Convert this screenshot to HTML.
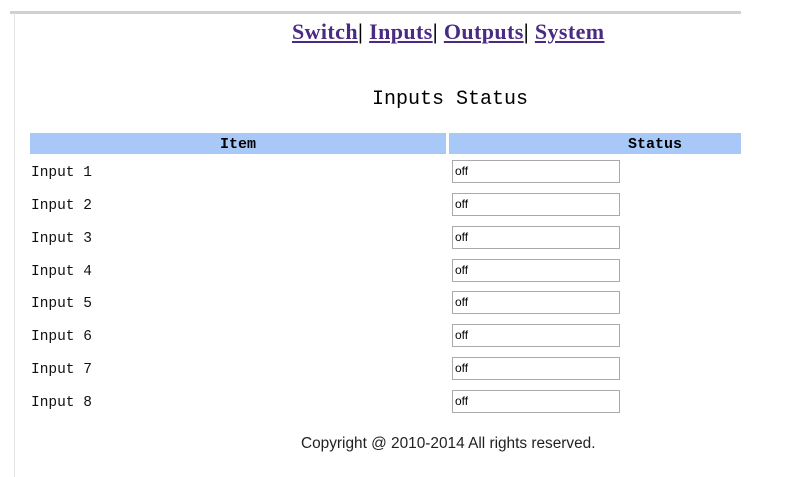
<!DOCTYPE html>
<html><head><style>
body{margin:0;width:796px;height:477px;background:#fff;position:relative;overflow:hidden;font-family:"Liberation Mono",monospace;}
.top{position:absolute;left:10px;top:11px;width:731px;height:3px;background:#d0d0d0;}
.left{position:absolute;left:14px;top:13px;width:1px;height:464px;background:#e4e4e4;}
.nav{position:absolute;left:292px;top:19px;font-family:"Liberation Serif",serif;font-weight:bold;font-size:22px;letter-spacing:0.4px;color:#000;white-space:nowrap;}
.nav a{color:#4a2a82;text-decoration:underline;}
.title{position:absolute;left:372px;top:88px;font-size:20px;color:#000;}
.hdr{position:absolute;top:133px;height:21px;background:#a8c8f8;font-weight:bold;font-size:15px;line-height:23px;text-align:center;}
.lbl{position:absolute;left:31px;font-size:14.5px;color:#111;}
.box{position:absolute;left:452px;border:1px solid #aaa;font-family:"Liberation Sans",sans-serif;font-size:12px;line-height:21px;padding-left:2px;box-sizing:border-box;width:168px;height:23px;}
.copy{position:absolute;left:301px;top:435px;font-family:"Liberation Sans",sans-serif;font-size:15.4px;color:#222;}
</style></head><body>
<div class="top"></div><div class="left"></div>
<div class="nav"><a>Switch</a>| <a>Inputs</a>| <a>Outputs</a>| <a>System</a></div>
<div class="title">Inputs Status</div>
<div class="hdr" style="left:30px;width:416px;">Item</div>
<div class="hdr" style="left:449px;width:292px;padding-left:179px;box-sizing:border-box;text-align:left;">Status</div>
<div class="lbl" style="top:165px">Input 1</div><div class="box" style="top:160px">off</div>
<div class="lbl" style="top:198px">Input 2</div><div class="box" style="top:193px">off</div>
<div class="lbl" style="top:231px">Input 3</div><div class="box" style="top:226px">off</div>
<div class="lbl" style="top:264px">Input 4</div><div class="box" style="top:259px">off</div>
<div class="lbl" style="top:296px">Input 5</div><div class="box" style="top:291px">off</div>
<div class="lbl" style="top:329px">Input 6</div><div class="box" style="top:324px">off</div>
<div class="lbl" style="top:362px">Input 7</div><div class="box" style="top:357px">off</div>
<div class="lbl" style="top:395px">Input 8</div><div class="box" style="top:390px">off</div>
<div class="copy">Copyright @ 2010-2014 All rights reserved.</div>
</body></html>
